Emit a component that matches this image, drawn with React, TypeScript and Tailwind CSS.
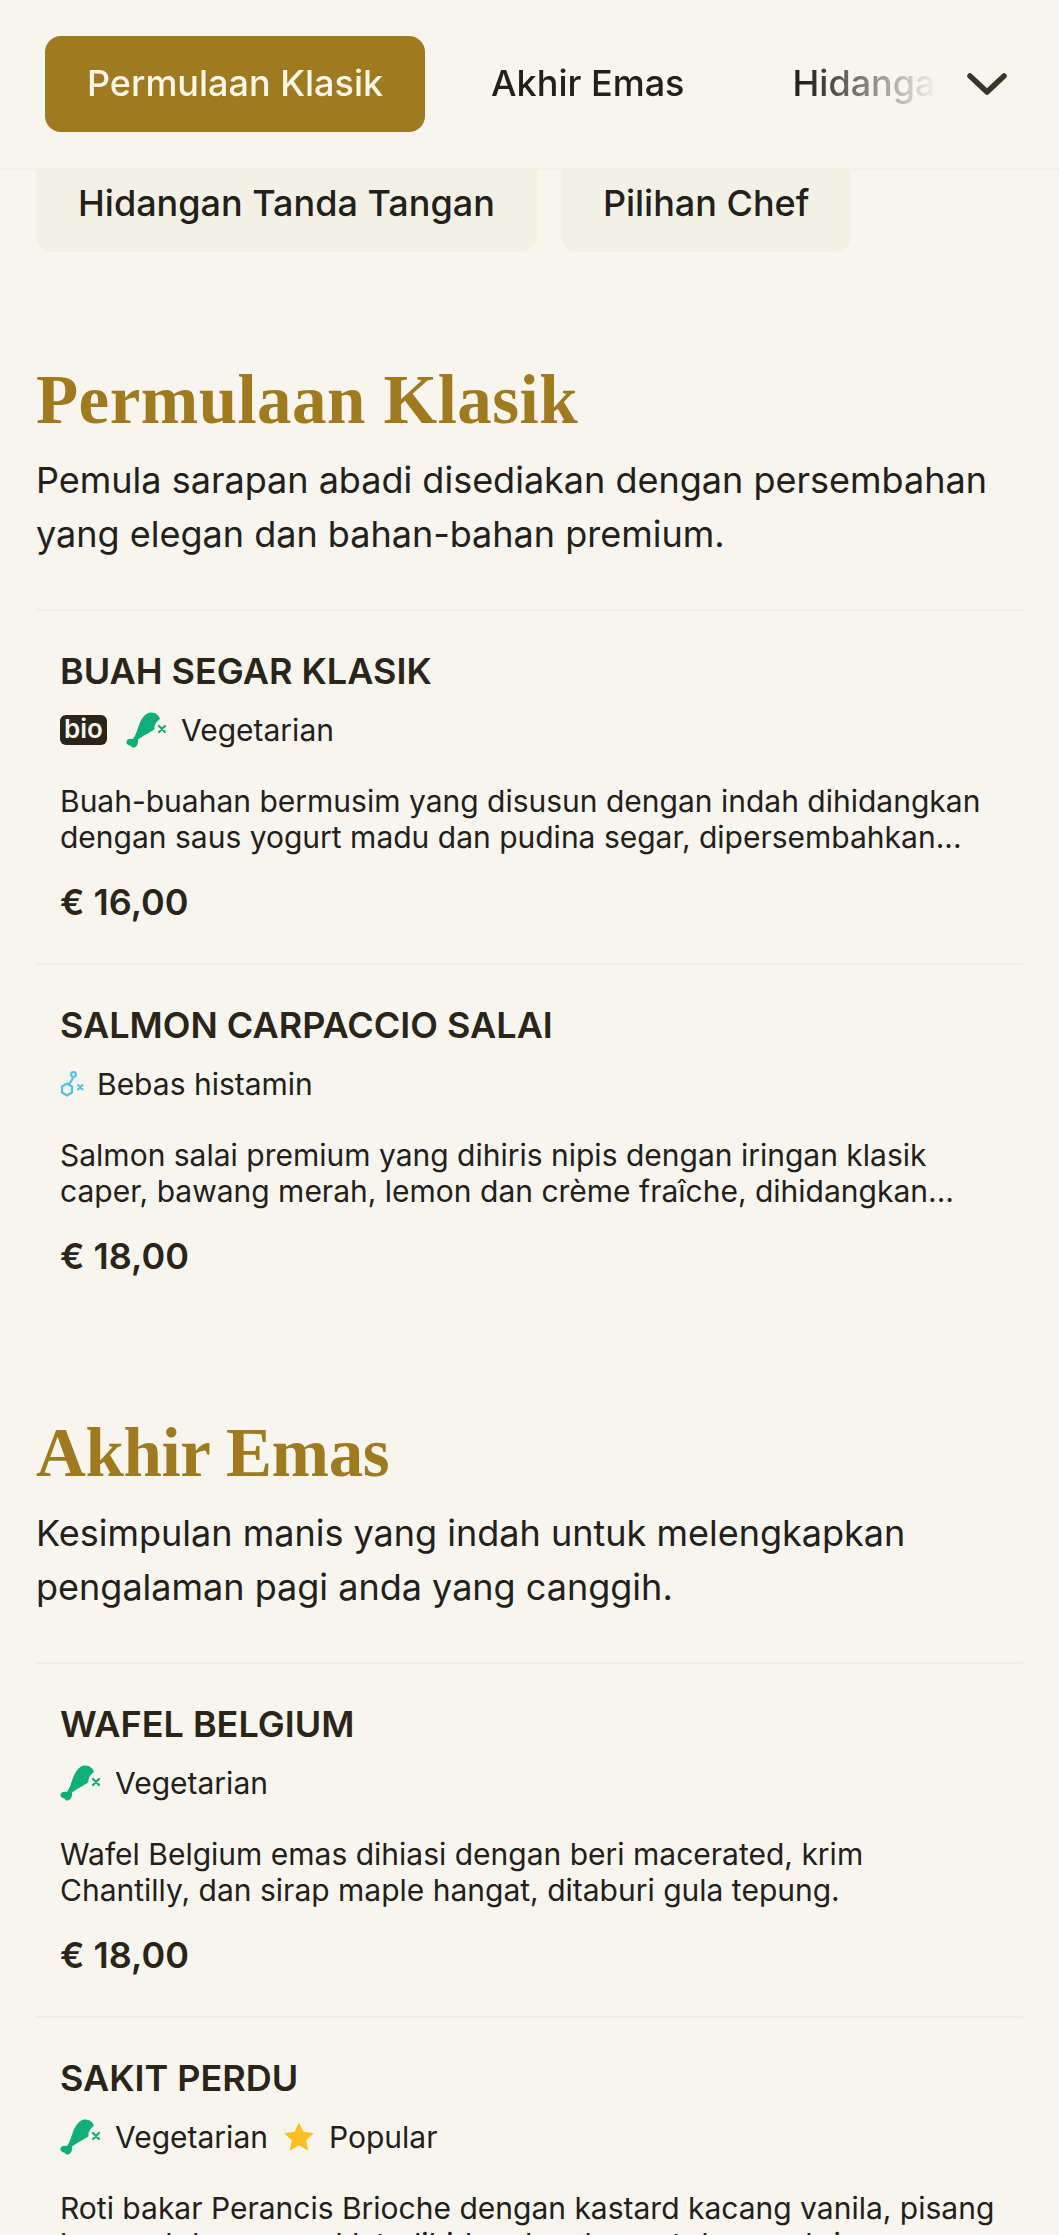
function DrumstickOff() {
  return (
    <svg width="42" height="36" viewBox="0 0 42 36" className="shrink-0">
      <path
        d="M24 .5C29 0 33 3 34 7c-3 2-6 5-5.500 10C25 20 18 23 12 27.500c.5 3.500-1 7.500-4 8-2 .5-3-1-3.500-2C2 33.500 0 31.500.5 29.500 1 27 4 26.500 7 27c3-4 4-9 6-14C15 7 19 1.500 24 .5Z"
        fill="#10ae79"
      />
      <path d="M33 14l6 6M39 14l-6 6" stroke="#10ae79" strokeWidth="2.200" strokeLinecap="round" />
    </svg>
  );
}

function HistamineOff() {
  return (
    <svg width="26" height="26" viewBox="0 0 26 26" fill="none" className="shrink-0" stroke="#4cc2e6">
      <path d="M7 12.500l5 3v6l-5 3-5-3v-6zM9 13.500L13 7" strokeWidth="2.200" strokeLinejoin="round" />
      <circle cx="13.500" cy="3.500" r="2.400" strokeWidth="2" />
      <path d="M18 14l4.500 4.500M22.500 14L18 18.500" strokeWidth="2" strokeLinecap="round" />
    </svg>
  );
}

function Star() {
  return (
    <svg width="30" height="30" viewBox="0 0 24 24" className="shrink-0" fill="#fbbf24">
      <path d="M12 .3l3.600 7.500 8.200 1.100-6 5.700 1.600 8.200L12 18.800l-7.400 4 1.600-8.200-6-5.700 8.200-1.100z" />
    </svg>
  );
}

function Tag({ children }: { children: React.ReactNode }) {
  return <span className="text-[30px] leading-[36px] text-[#23201a]">{children}</span>;
}

interface Dish {
  name: string;
  tags: React.ReactNode;
  desc: string[];
  price?: string;
}

function DishRow({ dish }: { dish: Dish }) {
  return (
    <div className="border-t-2 border-[#f1eee5] px-[24px] pt-[33px] h-[354px]">
      <h3 className="text-[36px] leading-[54px] font-semibold text-[#2a2518]">{dish.name}</h3>
      <div className="flex items-center h-[36px] mt-[14px]">{dish.tags}</div>
      <div className="mt-[35px] text-[30px] leading-[36px] text-[#23201a]">
        {dish.desc.map((line) => (
          <p key={line} className="whitespace-nowrap">{line}</p>
        ))}
      </div>
      {dish.price && (
        <p className="mt-[20px] text-[36px] leading-[54px] font-semibold text-[#2a2518]">{dish.price}</p>
      )}
    </div>
  );
}

const classics: Dish[] = [
  {
    name: "BUAH SEGAR KLASIK",
    tags: (
      <>
        <span className="flex items-center justify-center w-[47px] h-[30px] rounded-[6px] bg-[#2a2518] text-[#f8f5ee] text-[26px] font-semibold leading-none pb-[2px]">
          bio
        </span>
        <span className="ml-[19px] mr-[13px] flex">
          <DrumstickOff />
        </span>
        <Tag>Vegetarian</Tag>
      </>
    ),
    desc: [
      "Buah-buahan bermusim yang disusun dengan indah dihidangkan",
      "dengan saus yogurt madu dan pudina segar, dipersembahkan...",
    ],
    price: "€ 16,00",
  },
  {
    name: "SALMON CARPACCIO SALAI",
    tags: (
      <>
        <span className="mr-[11px] flex">
          <HistamineOff />
        </span>
        <Tag>Bebas histamin</Tag>
      </>
    ),
    desc: [
      "Salmon salai premium yang dihiris nipis dengan iringan klasik",
      "caper, bawang merah, lemon dan crème fraîche, dihidangkan...",
    ],
    price: "€ 18,00",
  },
];

const sweets: Dish[] = [
  {
    name: "WAFEL BELGIUM",
    tags: (
      <>
        <span className="mr-[13px] flex">
          <DrumstickOff />
        </span>
        <Tag>Vegetarian</Tag>
      </>
    ),
    desc: [
      "Wafel Belgium emas dihiasi dengan beri macerated, krim",
      "Chantilly, dan sirap maple hangat, ditaburi gula tepung.",
    ],
    price: "€ 18,00",
  },
  {
    name: "SAKIT PERDU",
    tags: (
      <>
        <span className="mr-[13px] flex">
          <DrumstickOff />
        </span>
        <Tag>Vegetarian</Tag>
        <span className="ml-[16px] mr-[15px] flex">
          <Star />
        </span>
        <Tag>Popular</Tag>
      </>
    ),
    desc: [
      "Roti bakar Perancis Brioche dengan kastard kacang vanila, pisang",
      "karamel dan sos coklat, dihidangkan hangat dengan krim masam",
    ],
  },
];

function Section({
  title,
  titleClass,
  lines,
  dishes,
}: {
  title: string;
  titleClass: string;
  lines: string[];
  dishes: Dish[];
}) {
  return (
    <section>
      <h2 className={`font-['Liberation_Serif',serif] font-bold text-[69px] leading-[80px] text-[#a07a1f] ${titleClass}`}>
        {title}
      </h2>
      <div className="mt-[13px] text-[36px] leading-[54px] text-[#23201a]">
        {lines.map((line) => (
          <p key={line} className="whitespace-nowrap">{line}</p>
        ))}
      </div>
      <div className="mt-[48px]">
        {dishes.map((dish) => (
          <DishRow key={dish.name} dish={dish} />
        ))}
      </div>
    </section>
  );
}

export default function App() {
  return (
    <div className="h-[2235px] overflow-hidden bg-[#f8f5ee] font-['Inter',sans-serif]">
      {/* Sticky tabs */}
      <header className="relative z-10 h-[170px] flex items-center pl-[45px] pr-[52px] bg-[#f8f5ee] border-b-2 border-[#f3f0e7]">
        <div className="w-[893px] flex items-center gap-[24px] overflow-hidden [mask-image:linear-gradient(to_right,black_85%,transparent_100%)]">
          <span className="shrink-0 h-[96px] flex items-center px-[42px] pb-[2px] rounded-[16px] bg-[#a07a1f] text-[#fbf7ea] text-[36px] font-medium">
            Permulaan Klasik
          </span>
          <span className="shrink-0 px-[42px] pb-[2px] text-[36px] font-medium text-[#23201a]">Akhir Emas</span>
          <span className="shrink-0 px-[42px] pb-[2px] text-[36px] font-medium text-[#23201a]">Hidangan Tanda Tangan</span>
        </div>
        <svg width="40" height="22" viewBox="0 0 40 22" fill="none" className="ml-auto shrink-0">
          <path d="M3 3l17 16L37 3" stroke="#38342a" strokeWidth="5.500" strokeLinecap="round" strokeLinejoin="round" />
        </svg>
      </header>

      <div className="px-[36px]">
        {/* Second row of tabs, partly under the header */}
        <nav className="-mt-[14px] flex gap-[24px]">
          <span className="h-[96px] flex items-center px-[42px] pb-[2px] rounded-[16px] bg-[#f3f1e6] text-[36px] font-medium text-[#23201a]">
            Hidangan Tanda Tangan
          </span>
          <span className="h-[96px] flex items-center px-[42px] pb-[2px] rounded-[16px] bg-[#f3f1e6] text-[36px] font-medium text-[#23201a]">
            Pilihan Chef
          </span>
        </nav>

        <div className="mt-[108px] flex flex-col gap-[96px]">
          <Section
            title="Permulaan Klasik"
            titleClass="tracking-[0.45px]"
            lines={[
              "Pemula sarapan abadi disediakan dengan persembahan",
              "yang elegan dan bahan-bahan premium.",
            ]}
            dishes={classics}
          />
          <Section
            title="Akhir Emas"
            titleClass="tracking-[-0.4px]"
            lines={[
              "Kesimpulan manis yang indah untuk melengkapkan",
              "pengalaman pagi anda yang canggih.",
            ]}
            dishes={sweets}
          />
        </div>
      </div>
    </div>
  );
}
